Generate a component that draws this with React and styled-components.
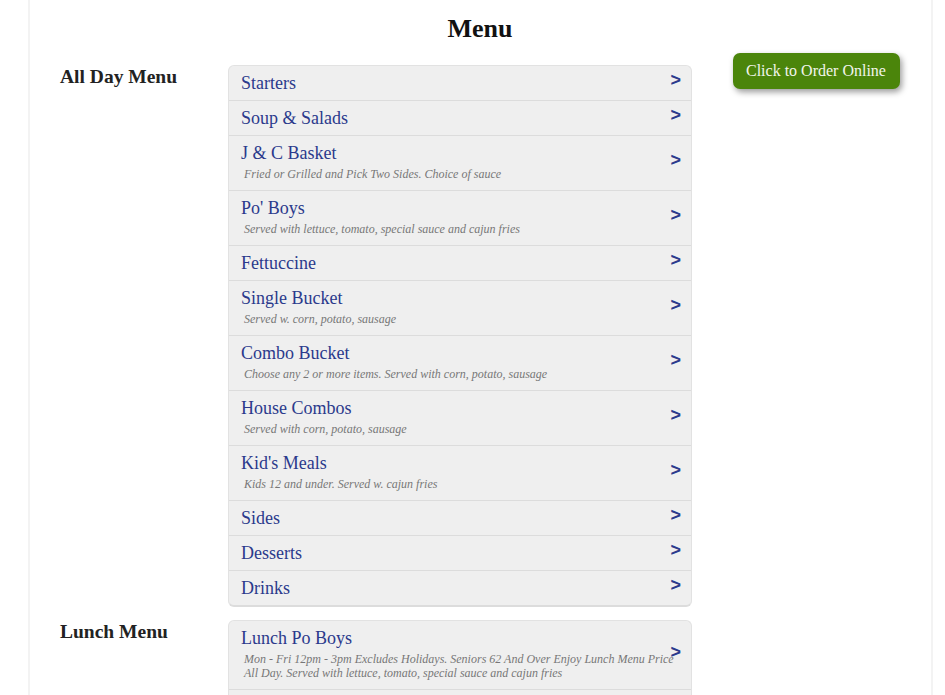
import React from 'react';
import styled, { createGlobalStyle } from 'styled-components';

const GlobalStyle = createGlobalStyle`
  body {
    margin: 0;
    background: #fff;
    font-family: "Liberation Serif", "Times New Roman", serif;
  }
`;

const Page = styled.div`
  width: 840px;
  margin-left: 28px;
  padding: 14px 31px 20px 30px;
  min-height: 700px;
  border-left: 2px solid #f3f3f3;
  border-right: 2px solid #f3f3f3;
`;

const Title = styled.h1`
  margin: 0 0 9px;
  text-align: center;
  font-size: 26px;
  line-height: 30px;
  font-weight: bold;
  color: #111;
`;

const Section = styled.div`
  display: grid;
  grid-template-columns: 168px 464px 1fr;
  align-items: start;
  margin-bottom: 13px;
`;

const Label = styled.h2`
  margin: ${p => (p.$first ? '13px' : '1px')} 0 0;
  font-size: 19.5px;
  line-height: 22px;
  font-weight: bold;
  color: #222;
`;

const List = styled.div`
  margin-top: ${p => (p.$first ? '12px' : '0')};
  background: #efefef;
  border: 1px solid #e2e2e2;
  border-bottom: 2px solid #dcdcdc;
  border-radius: 6px;
  overflow: hidden;
`;

const Row = styled.div`
  position: relative;
  padding: 7px 12px 6px 12px;
  border-top: ${p => (p.$first ? 'none' : '1px solid #dcdcdc')};
`;

const ItemName = styled.div`
  font-size: 18px;
  line-height: 21px;
  color: #2b3a8c;
`;

const ItemDesc = styled.div`
  margin: 3px 0 3px 3px;
  font-size: 12px;
  line-height: 14px;
  font-style: italic;
  color: #777;
`;

const Arrow = styled.span`
  position: absolute;
  right: 10px;
  top: 50%;
  transform: translateY(-62%);
  font-family: "Liberation Sans", Arial, sans-serif;
  font-weight: bold;
  font-size: 18px;
  color: #2b3a8c;
`;

const OrderButton = styled.a`
  justify-self: start;
  margin-left: 41px;
  display: inline-block;
  padding: 9px 14px 9px 13px;
  font-size: 16px;
  line-height: 18px;
  color: #f2f5ec;
  background: #4b850b;
  border-radius: 7px;
  box-shadow: 2px 3px 6px rgba(0, 0, 0, 0.4);
  text-decoration: none;
  cursor: pointer;
`;

const allDay = [
  { name: 'Starters' },
  { name: 'Soup & Salads' },
  { name: 'J & C Basket', desc: 'Fried or Grilled and Pick Two Sides. Choice of sauce' },
  { name: "Po' Boys", desc: 'Served with lettuce, tomato, special sauce and cajun fries' },
  { name: 'Fettuccine' },
  { name: 'Single Bucket', desc: 'Served w. corn, potato, sausage' },
  { name: 'Combo Bucket', desc: 'Choose any 2 or more items. Served with corn, potato, sausage' },
  { name: 'House Combos', desc: 'Served with corn, potato, sausage' },
  { name: "Kid's Meals", desc: 'Kids 12 and under. Served w. cajun fries' },
  { name: 'Sides' },
  { name: 'Desserts' },
  { name: 'Drinks' },
];

const lunch = [
  {
    name: 'Lunch Po Boys',
    desc: 'Mon - Fri 12pm - 3pm Excludes Holidays. Seniors 62 And Over Enjoy Lunch Menu Price All Day. Served with lettuce, tomato, special sauce and cajun fries',
  },
  { name: 'Lunch Baskets' },
];

const MenuList = ({ items, first }) => (
  <List $first={first}>
    {items.map((item, i) => (
      <Row key={item.name} $first={i === 0}>
        <ItemName>{item.name}</ItemName>
        {item.desc && <ItemDesc>{item.desc}</ItemDesc>}
        <Arrow>&gt;</Arrow>
      </Row>
    ))}
  </List>
);

export default function App() {
  return (
    <>
      <GlobalStyle />
      <Page>
        <Title>Menu</Title>
        <Section>
          <Label $first>All Day Menu</Label>
          <MenuList items={allDay} first />
          <OrderButton>Click to Order Online</OrderButton>
        </Section>
        <Section>
          <Label>Lunch Menu</Label>
          <MenuList items={lunch} />
        </Section>
      </Page>
    </>
  );
}
